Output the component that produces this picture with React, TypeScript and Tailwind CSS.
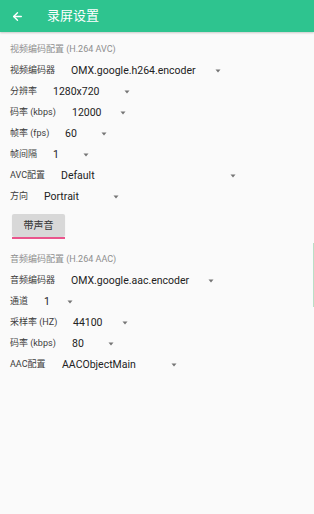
import React from 'react';
import { ArrowLeft } from 'lucide-react';

interface RowProps {
  label: string;
  value: string;
  valueX: number;
  caretX: number;
}

const videoRows: RowProps[] = [
  { label: '视频编码器', value: 'OMX.google.h264.encoder', valueX: 71, caretX: 218 },
  { label: '分辨率', value: '1280x720', valueX: 53, caretX: 127 },
  { label: '码率 (kbps)', value: '12000', valueX: 72, caretX: 123 },
  { label: '帧率 (fps)', value: '60', valueX: 65, caretX: 104 },
  { label: '帧间隔', value: '1', valueX: 53, caretX: 86 },
  { label: 'AVC配置', value: 'Default', valueX: 61, caretX: 233 },
  { label: '方向', value: 'Portrait', valueX: 44, caretX: 116 },
];

const audioRows: RowProps[] = [
  { label: '音频编码器', value: 'OMX.google.aac.encoder', valueX: 71, caretX: 211 },
  { label: '通道', value: '1', valueX: 44, caretX: 70 },
  { label: '采样率 (HZ)', value: '44100', valueX: 73, caretX: 125 },
  { label: '码率 (kbps)', value: '80', valueX: 72, caretX: 111 },
  { label: 'AAC配置', value: 'AACObjectMain', valueX: 62, caretX: 174 },
];

function Caret() {
  return (
    <svg width="6" height="4" viewBox="0 0 6 4" className="shrink-0">
      <path d="M0.5 0.5 L5.5 0.5 L3 3.5 Z" fill="#757575" />
    </svg>
  );
}

function SpinnerRow({ label, value, valueX, caretX }: RowProps) {
  return (
    <div className="h-[21px] flex items-center pl-[10px]">
      <span className="text-[9px] text-[#3c3c3c] whitespace-nowrap shrink-0" style={{ width: valueX - 10 }}>
        {label}
      </span>
      <div className="flex items-center" style={{ width: caretX + 3 - valueX }}>
        <span className="text-[10.5px] text-[#222] whitespace-nowrap flex-1">{value}</span>
        <Caret />
      </div>
    </div>
  );
}

function SectionTitle({ text }: { text: string }) {
  return (
    <div className="h-[20px] flex items-center pl-[10px] text-[9px] text-[#8e8e8e]">{text}</div>
  );
}

export default function App() {
  return (
    <div
      className="relative w-[314px] h-[514px] bg-[#fafafa] overflow-hidden"
      style={{ fontFamily: 'Roboto, "Noto Sans CJK SC", sans-serif' }}
    >
      <div className="h-[32px] bg-[#2ec48f] flex items-center shadow-[0_1px_2px_rgba(0,0,0,0.2)]">
        <ArrowLeft className="ml-[11px] text-white" size={13} strokeWidth={2.6} />
        <span className="ml-[23px] text-[13px] text-white">录屏设置</span>
      </div>

      <div className="pt-[8px]">
        <SectionTitle text="视频编码配置 (H.264 AVC)" />
        {videoRows.map((r) => (
          <SpinnerRow key={r.label} {...r} />
        ))}

        <div className="ml-[12px] mt-[7px] w-[53px]">
          <div className="h-[22px] bg-[#d8d8d8] rounded-[2px] shadow-[0_1px_1px_rgba(0,0,0,0.15)] flex items-center justify-center text-[10px] text-[#333]">
            带声音
          </div>
          <div className="h-[2px] mt-[1px] bg-[#e9558c]" />
        </div>

        <div className="mt-[11px]">
          <SectionTitle text="音频编码配置 (H.264 AAC)" />
          {audioRows.map((r) => (
            <SpinnerRow key={r.label + r.value} {...r} />
          ))}
        </div>
      </div>

      <div className="absolute right-0 top-[243px] w-[1px] h-[64px] bg-[#b9dfc6]" />
    </div>
  );
}
